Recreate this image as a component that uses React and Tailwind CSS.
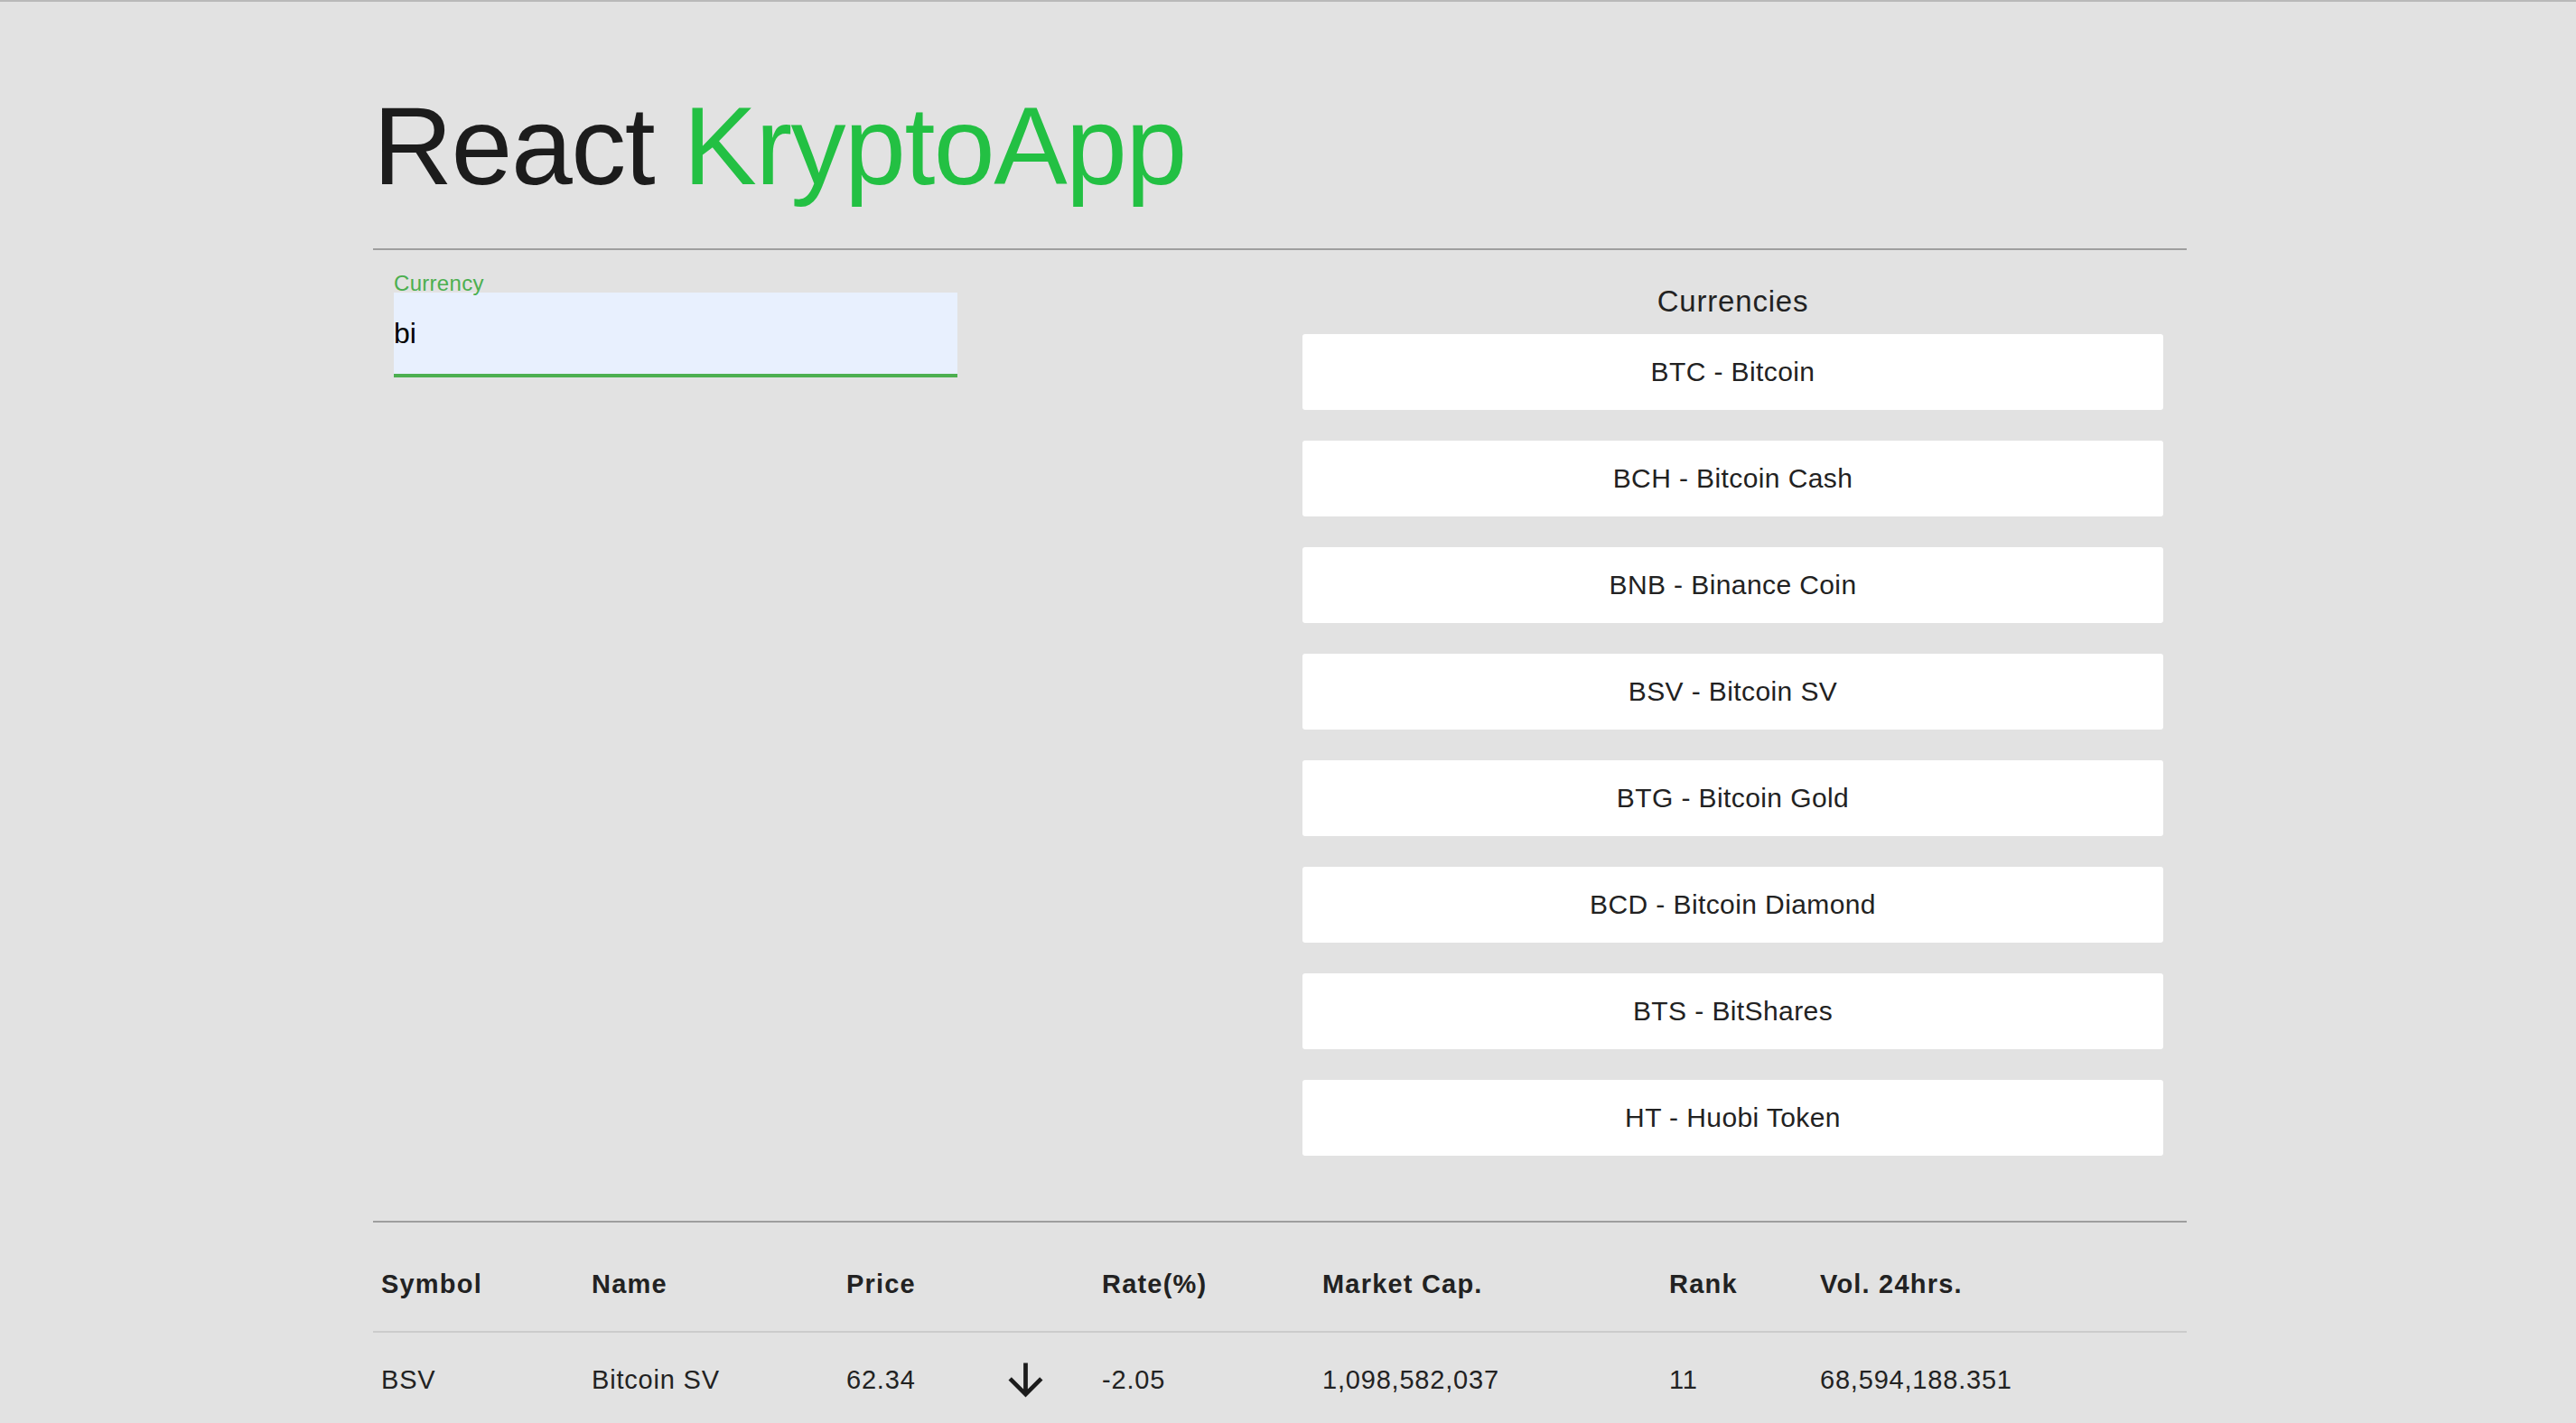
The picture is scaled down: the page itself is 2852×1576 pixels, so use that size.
import React, { useState } from 'react';

const currencies = [
  { symbol: 'BTC', name: 'Bitcoin' },
  { symbol: 'BCH', name: 'Bitcoin Cash' },
  { symbol: 'BNB', name: 'Binance Coin' },
  { symbol: 'BSV', name: 'Bitcoin SV' },
  { symbol: 'BTG', name: 'Bitcoin Gold' },
  { symbol: 'BCD', name: 'Bitcoin Diamond' },
  { symbol: 'BTS', name: 'BitShares' },
  { symbol: 'HT', name: 'Huobi Token' },
];

const rows = [
  {
    symbol: 'BSV',
    name: 'Bitcoin SV',
    price: '62.34',
    rate: '-2.05',
    marketCap: '1,098,582,037',
    rank: '11',
    volume: '68,594,188.351',
  },
];

const ArrowDownward = () => (
  <svg viewBox="0 0 24 24" className="w-[57px] h-[57px] fill-[#1c1c1c]">
    <path d="M20 12l-1.41-1.41L13 16.17V4h-2v12.17l-5.58-5.59L4 12l8 8 8-8z" />
  </svg>
);

const gridCols = 'grid grid-cols-[233px_282px_170px_113px_244px_384px_167px_1fr]';

const App = () => {
  const [query, setQuery] = useState('bi');

  return (
    <div className="min-h-screen bg-[#e2e2e2] border-t-2 border-[#b9b9b9] font-['Liberation_Sans',Arial,sans-serif] text-[#222]">
      <div className="ml-[413px] w-[2008px]">
        <h1 className="pt-[99px] text-[122px] leading-none tracking-[-1.5px] text-[#1c1c1c]">
          React <span className="text-[#23c043]">KryptoApp</span>
        </h1>

        <div className="mt-[52px] h-[2px] bg-[#9e9e9e]" />

        <div className="grid grid-cols-2">
          {/* search */}
          <div className="pl-[23px] pt-[27px]">
            <label className="block text-[24px] leading-[20px] tracking-[0.3px] text-[#4caf50]">Currency</label>
            <input
              value={query}
              onChange={(e) => setQuery(e.target.value)}
              className="block w-[624px] h-[94px] p-0 bg-[#e8f0fe] border-b-4 border-[#4caf50] text-[32px] text-black outline-none"
            />
          </div>

          {/* list of matches */}
          <div className="pl-[25px] pr-[26px] pt-[40px]">
            <h2 className="text-center text-[33px] leading-none tracking-[0.8px]">Currencies</h2>
            <div className="mt-[20px] flex flex-col gap-[34px]">
              {currencies.map((c) => (
                <div
                  key={c.symbol}
                  className="h-[84px] bg-white rounded-[3px] flex items-center justify-center text-[30px] leading-none tracking-[0.4px]"
                >
                  {c.symbol} - {c.name}
                </div>
              ))}
            </div>
          </div>
        </div>

        <div className="mt-[72px] h-[2px] bg-[#9e9e9e]" />

        <div className="mt-[17px]">
          <div className={`${gridCols} border-b-2 border-[#cbcbcb] py-[37px] text-[29px] leading-none tracking-[1.2px] font-bold`}>
            <div className="pl-[9px]">Symbol</div>
            <div className="pl-[9px]">Name</div>
            <div className="pl-[9px]">Price</div>
            <div />
            <div className="pl-[9px]">Rate(%)</div>
            <div className="pl-[9px]">Market Cap.</div>
            <div className="pl-[9px]">Rank</div>
            <div className="pl-[9px]">Vol. 24hrs.</div>
          </div>

          {rows.map((r) => (
            <div key={r.symbol} className={`${gridCols} items-center pt-[24px] pb-[25px] text-[29px] leading-none tracking-[0.8px]`}>
              <div className="pl-[9px]">{r.symbol}</div>
              <div className="pl-[9px]">{r.name}</div>
              <div className="pl-[9px]">{r.price}</div>
              <div className="pl-[9px]">
                <ArrowDownward />
              </div>
              <div className="pl-[9px]">{r.rate}</div>
              <div className="pl-[9px]">{r.marketCap}</div>
              <div className="pl-[9px]">{r.rank}</div>
              <div className="pl-[9px]">{r.volume}</div>
            </div>
          ))}
        </div>
      </div>
    </div>
  );
};

export default App;
